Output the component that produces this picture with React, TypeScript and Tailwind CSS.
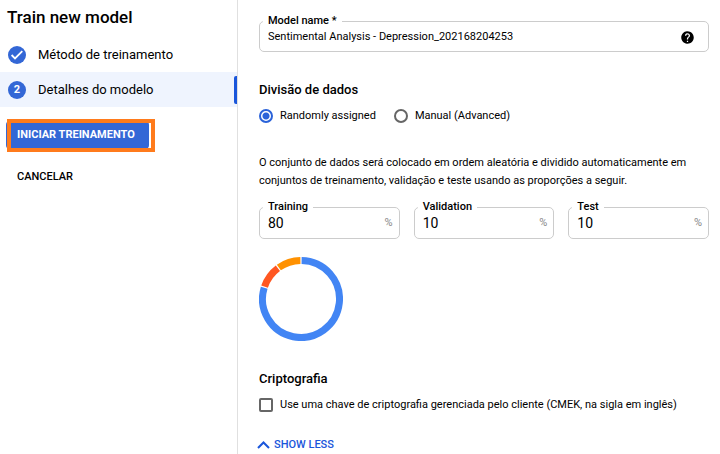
import React, { useState } from 'react';

const SPLITS = [
  { id: 'training', label: 'Training', value: 80, color: '#4285f4' },
  { id: 'validation', label: 'Validation', value: 10, color: '#ff5722' },
  { id: 'test', label: 'Test', value: 10, color: '#ff9100' }
];

const RADIUS = 38.5;

const point = (percent: number) => {
  const angle = (percent / 100) * 2 * Math.PI - Math.PI / 2;
  return `${42 + RADIUS * Math.cos(angle)} ${42 + RADIUS * Math.sin(angle)}`;
};

const SplitChart: React.FC = () => {
  let start = 0;
  return (
    <svg viewBox="0 0 84 84" className="block size-[84px]" role="img" aria-label="Data split">
      {SPLITS.map((s) => {
        const from = start;
        start += s.value;
        return (
          <path
            key={s.id}
            d={`M${point(from + 0.25)} A${RADIUS} ${RADIUS} 0 ${s.value > 50 ? 1 : 0} 1 ${point(start - 0.25)}`}
            fill="none"
            stroke={s.color}
            strokeWidth="7"
          />
        );
      })}
    </svg>
  );
};

const Sidebar: React.FC = () => (
  <aside className="w-[238px] shrink-0 border-r border-[#e0e0e0]">
    <h1 className="h-[37px] pl-[7px] pt-1 text-[17px] leading-[26px] font-medium">Train new model</h1>

    {/* Steps */}
    <ol className="text-[13px] leading-5">
      <li className="flex h-[35px] items-center gap-3 pl-2">
        <svg viewBox="0 0 18 18" className="size-[18px]">
          <circle cx="9" cy="9" r="9" fill="#3367d6" />
          <path d="M3.6 9 L7 12.4 L14.3 5.2" fill="none" stroke="#fff" strokeWidth="1.8" />
        </svg>
        <span>Método de treinamento</span>
      </li>
      <li className="flex h-[35px] items-center gap-3 bg-[#eff4fe] pl-2" aria-current="step">
        <span className="flex size-[18px] items-center justify-center rounded-full bg-[#3367d6] text-[11px] font-bold text-white">2</span>
        <span>Detalhes do modelo</span>
        <span className="ml-auto h-7 w-[3px] rounded-l-xs bg-[#1a56db]"></span>
      </li>
    </ol>

    {/* Actions */}
    <div className="flex flex-col items-start gap-3.5 pl-1.5 pt-3.5 text-[11px] font-medium">
      <div className="relative">
        <button type="button" className="h-7 rounded-sm bg-[#3367d6] pr-3.5 pl-[11px] font-bold text-white">
          INICIAR TREINAMENTO
        </button>
        <span className="pointer-events-none absolute -top-0.5 -right-1.5 -bottom-[3px] left-px border-4 border-[#ff7b1c]"></span>
      </div>
      <button type="button" className="h-7 px-[11px]">CANCELAR</button>
    </div>
  </aside>
);

const App: React.FC = () => {
  const [mode, setMode] = useState('random');
  const radio = 'size-3.5 appearance-none rounded-full border-2 border-[#666] checked:border-[#2a62d9] checked:bg-[radial-gradient(circle,#2a62d9_3px,transparent_4px)]';

  return (
    <div className="flex min-h-screen bg-white font-['Roboto',sans-serif] text-black">
      <Sidebar />

      <main className="min-w-0 flex-1 pl-[21px] pr-[11px] pt-3.5 text-[11px] leading-[18px]">
        <fieldset className="rounded-[5px] border border-[#ccc] px-[3px] pb-[5px]">
          <legend className="px-[5px] text-[11px] leading-[14px] font-medium">
            <label htmlFor="model-name">Model name *</label>
          </legend>
          <div className="flex h-[18px] items-center pl-[5px] pr-2.5">
            <input
              id="model-name"
              type="text"
              defaultValue="Sentimental Analysis - Depression_202168204253"
              className="min-w-0 flex-1 outline-none"
            />
            <button type="button" aria-label="Help">
              <svg viewBox="0 0 24 24" className="block size-[15px]" fill="currentColor">
                <path d="M12 2C6.48 2 2 6.48 2 12s4.48 10 10 10 10-4.48 10-10S17.52 2 12 2zm1 17h-2v-2h2v2zm2.07-7.75l-.9.92C13.45 12.9 13 13.5 13 15h-2v-.5c0-1.1.45-2.1 1.17-2.83l1.24-1.26c.37-.36.59-.86.59-1.41 0-1.1-.9-2-2-2s-2 .9-2 2H8c0-2.21 1.79-4 4-4s4 1.79 4 4c0 .88-.36 1.68-.93 2.25z" />
              </svg>
            </button>
          </div>
        </fieldset>

        {/* Data split */}
        <h2 className="mt-7 text-[13px] leading-5 font-medium">Divisão de dados</h2>
        <div className="mt-1.5 flex h-5 items-center gap-[18px]">
          <label className="flex items-center gap-[7px]">
            <input type="radio" name="split" className={radio} checked={mode === 'random'} onChange={() => setMode('random')} />
            Randomly assigned
          </label>
          <label className="flex items-center gap-[7px]">
            <input type="radio" name="split" className={radio} checked={mode === 'manual'} onChange={() => setMode('manual')} />
            Manual (Advanced)
          </label>
        </div>
        <p className="mt-7">
          O conjunto de dados será colocado em ordem aleatória e dividido automaticamente em conjuntos de treinamento, validação e teste usando as proporções a seguir.
        </p>
        <div className="mt-2.5 grid grid-cols-3 gap-3.5">
          {SPLITS.map((s) => (
            <fieldset key={s.id} className="min-w-0 rounded-[5px] border border-[#ccc] px-[3px] pb-1.5">
              <legend className="px-[5px] text-[11px] leading-[14px] font-medium">
                <label htmlFor={s.id}>{s.label}</label>
              </legend>
              <div className="flex h-[18px] items-center pr-[3px] pl-[5px]">
                <input id={s.id} type="text" defaultValue={s.value} className="min-w-0 flex-1 text-sm leading-[18px] outline-none" />
                <span className="text-[11px] text-[#888]">%</span>
              </div>
            </fieldset>
          ))}
        </div>
        <div className="mt-[18px]">
          <SplitChart />
        </div>

        {/* Encryption */}
        <h2 className="mt-7 text-[13px] leading-5 font-medium">Criptografia</h2>
        <label className="mt-1.5 flex h-5 items-center gap-[7px]">
          <input
            type="checkbox"
            className="size-3.5 appearance-none rounded-xs border-2 border-[#666] checked:bg-[#2a62d9]"
          />
          Use uma chave de criptografia gerenciada pelo cliente (CMEK, na sigla em inglês)
        </label>

        <button type="button" className="mt-5 -ml-0.5 flex h-5 items-center gap-1 font-medium text-[#1a56db]">
          <svg viewBox="0 0 13 14" className="h-3.5 w-[13px]" fill="none" stroke="currentColor" strokeWidth="2">
            <path d="M1 10 L6.5 4.5 L12 10" />
          </svg>
          SHOW LESS
        </button>
      </main>
    </div>
  );
};

export default App;
